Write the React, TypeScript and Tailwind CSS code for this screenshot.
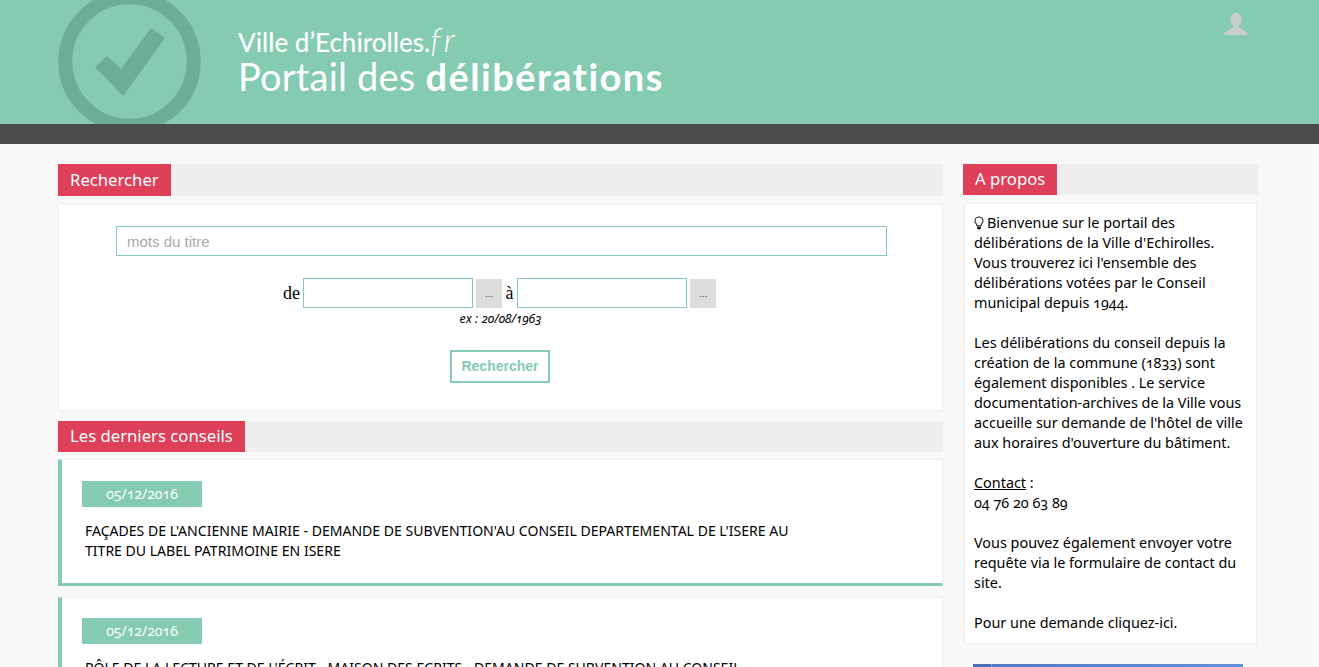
import React from 'react';

const body = "font-['Noto_Sans',sans-serif] oldstyle-nums";

const SectionTitle: React.FC<{ title: string; className?: string; tall?: boolean }> = ({ title, className, tall }) => (
  <div className={`flex bg-[#eeeeee] ${className ?? ''}`}>
    <h2 className={`bg-[#dd4058] px-3 text-white text-[16.7px] ${tall ? 'leading-[32px]' : 'leading-[30px] pb-px'}`}>
      {title}
    </h2>
  </div>
);

const Council: React.FC<{ date: string; text: string; last?: boolean }> = ({ date, text, last }) => (
  <article
    className={`bg-white border border-[#eeeeee] border-l-4 border-l-[#84cbb2] pl-5 ${
      last ? 'mt-[11px]' : 'mt-[7px] border-b-[3px] border-b-[#84cbb2] h-[127px]'
    }`}
  >
    <div
      className={`${last ? 'mt-5' : 'mt-[21px]'} w-[120px] h-[26px] bg-[#84cbb2] text-white text-center text-[14px] leading-[26px]`}
    >
      {date}
    </div>
    <p className="mt-[14px] ml-[3px] w-[720px] text-[14.05px] leading-[20px] text-black">{text}</p>
  </article>
);

const App: React.FC = () => {
  return (
    <div className={`h-[667px] overflow-hidden bg-[#f8f8f8] ${body}`}>
      <header className="h-[124px] bg-[#84cbb2] flex pl-[58px] pr-[70px]">
        <svg width="143" height="124" viewBox="0 0 143 124" className="shrink-0">
          <circle cx="71.5" cy="61.5" r="64.200" fill="none" stroke="#6bad98" strokeWidth="14" />
          <path d="M37 67 L49 56 L63 69 L93 28 L107 38 L65 96 Z" fill="#6bad98" />
        </svg>
        <div className="ml-[37px] pt-[24px] text-white font-['Lato',sans-serif]">
          <div className="h-[31px] text-[26px] leading-[36px] font-medium whitespace-nowrap">
            Ville d’Echirolles.<span className="italic font-light text-[34px] leading-[20px] tracking-[3px]">fr</span>
          </div>
          <div className="text-[38px] leading-[42px] tracking-[0.2px] whitespace-nowrap">
            Portail des <span className="font-bold tracking-[1.45px]">délibérations</span>
          </div>
        </div>
        <svg width="26" height="24" viewBox="0 0 26 24" className="ml-auto mt-[13px] shrink-0" fill="#c9cfcb">
          <path d="M13 0c3.600 0 5.400 2.600 5.400 6 0 2.600-1 4.800-2.400 6.200v2.200c1.600 1.400 6.200 2.400 10 7.600H0c3.800-5.200 8.400-6.200 10-7.600v-2.200C8.600 10.800 7.600 8.600 7.600 6 7.600 2.600 9.400 0 13 0z" />
        </svg>
      </header>
      <div className="h-5 bg-[#4c4c4c]" />

      <main className="flex items-start gap-5 pl-[58px] pt-5">
        <section className="w-[885px] shrink-0">
          <SectionTitle tall title="Rechercher" />
          <div className="mt-2 h-[207px] bg-white border border-[#eeeeee] flex flex-col items-center pt-[21px]">
            <input
              placeholder="mots du titre"
              className="ml-[2px] w-[771px] h-[30px] shrink-0 border border-[#84cbb2] px-[10px] text-[15px] font-['Liberation_Sans',sans-serif] placeholder:text-[#a9a9a9] outline-none"
            />
            <div className="mt-[22px] mr-[2px] flex items-center font-['Liberation_Serif',serif] text-[18px] text-black">
              <span>de</span>
              <input className="ml-[3px] w-[170px] h-[30px] border border-[#84cbb2]" />
              <button type="button" className="ml-[3px] w-[26px] h-[29px] bg-[#dddddd] text-[11px] text-[#555555]">
                ...
              </button>
              <span className="mx-[3.500px]">à</span>
              <input className="w-[170px] h-[30px] border border-[#84cbb2]" />
              <button type="button" className="ml-[3px] w-[26px] h-[29px] bg-[#dddddd] text-[11px] text-[#555555]">
                ...
              </button>
            </div>
            <p className="mt-[3px] text-[12.5px] leading-[16px] italic text-black">ex : 20/08/1963</p>
            <button
              type="button"
              className="mt-[23px] mr-[2px] pl-px w-[100px] h-[33px] border-2 border-[#84cbb2] text-[#84cbb2] text-[14px] font-bold font-['Liberation_Sans',sans-serif]"
            >
              Rechercher
            </button>
          </div>

          <SectionTitle title="Les derniers conseils" className="mt-[10px]" />
          <Council
            date="05/12/2016"
            text="FAÇADES DE L'ANCIENNE MAIRIE - DEMANDE DE SUBVENTION'AU CONSEIL DEPARTEMENTAL DE L'ISERE AU TITRE DU LABEL PATRIMOINE EN ISERE"
          />
          <Council
            last
            date="05/12/2016"
            text="PÔLE DE LA LECTURE ET DE L'ÉCRIT - MAISON DES ECRITS - DEMANDE DE SUBVENTION AU CONSEIL"
          />
        </section>

        <aside className="w-[295px] shrink-0">
          <SectionTitle title="A propos" />
          <div className="mt-2 mx-px bg-white border border-[#eeeeee] pl-[9px] pr-[10px] pt-[9px] pb-[10px] text-[14.4px] leading-[20px] text-black">
            <p>
              <svg width="10" height="14" viewBox="0 0 10 14" className="inline-block align-[-2px] mr-[3px]">
                <path d="M5 1C2.600 1 1 2.700 1 4.700c0 2 1.700 3 2 5h4c.3-2 2-3 2-5C9 2.700 7.400 1 5 1z" fill="none" stroke="#222222" strokeWidth="1.100" />
                <path d="M3.200 10.500h3.600V12.500L5.800 13.500H4.200L3.200 12.500z" fill="#111111" />
              </svg>
              Bienvenue sur le portail des délibérations de la Ville d'Echirolles. Vous trouverez ici l'ensemble des délibérations votées par le Conseil municipal depuis 1944.
            </p>
            <p className="mt-5">Les délibérations du conseil depuis la création de la commune (1833) sont également disponibles . Le service documentation-archives de la Ville vous accueille sur demande de l'hôtel de ville aux horaires d'ouverture du bâtiment.</p>
            <p className="mt-5"><span className="underline">Contact</span> :<br />04 76 20 63 89</p>
            <p className="mt-5">Vous pouvez également envoyer votre requête via le formulaire de contact du site.</p>
            <p className="mt-5">Pour une demande cliquez-ici.</p>
          </div>
          <div className="mt-5 ml-[10px] w-[270px] h-[30px] bg-linear-to-r from-[#5079c6] to-[#6390da] flex">
            <div className="w-[19px] bg-[#4a70b8] border-r border-[#7f9fd6]" />
          </div>
        </aside>
      </main>
    </div>
  );
};

export default App;
